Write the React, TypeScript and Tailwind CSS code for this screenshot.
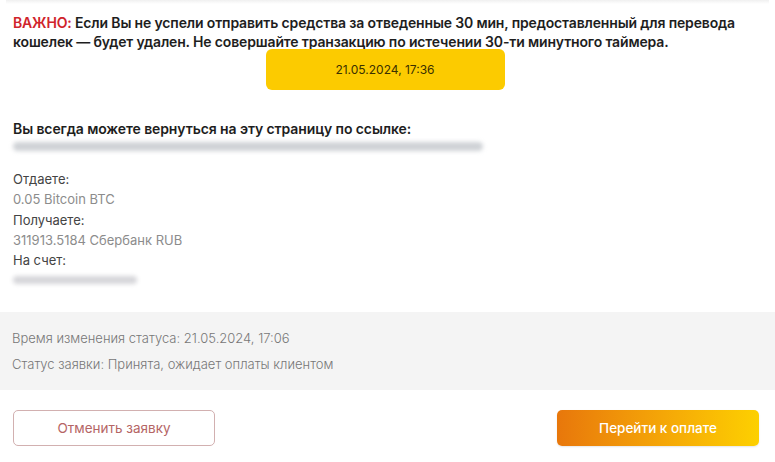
import React from "react";

export default function App() {
  return (
    <div className="w-[775px] h-[462px] bg-white overflow-hidden relative" style={{ fontFamily: "Inter, 'Noto Sans', sans-serif" }}>
      <div className="absolute left-[6px] right-[6px] top-0 h-[4px] bg-gradient-to-b from-[#f0f0f0] to-white" />
      <div className="px-[13px] pt-[13px]">
        <p className="text-[14px] leading-[19px] font-semibold text-[#1e1e1e] tracking-[-0.15px]">
          <span className="text-[#d0242b]">ВАЖНО:</span> Если Вы не успели отправить средства за отведенные 30 мин, предоставленный для перевода кошелек — будет удален. Не совершайте транзакцию по истечении 30-ти минутного таймера.
        </p>
        <div className="flex justify-center mt-[-2px] pr-[5px]">
          <div className="w-[239px] h-[41px] rounded-[6px] bg-[#fccb00] flex items-center justify-center text-[12px] text-[#3a3000]">
            21.05.2024, 17:36
          </div>
        </div>
        <p className="mt-[29px] text-[14px] leading-[19px] font-semibold text-[#1e1e1e] tracking-[-0.1px]">
          Вы всегда можете вернуться на эту страницу по ссылке:
        </p>
        <div className="h-[16px] flex items-center">
          <div className="w-[470px] h-[9px] rounded-full bg-[#cfd2d6] blur-[2px]" />
        </div>
        <div className="mt-[15px] flex flex-col text-[13px] leading-[20.3px]">
          <span className="text-[#444]">Отдаете:</span>
          <span className="text-[#8c8c8c]">0.05 Bitcoin BTC</span>
          <span className="text-[#444]">Получаете:</span>
          <span className="text-[#8c8c8c]">311913.5184 Сбербанк RUB</span>
          <span className="text-[#444]">На счет:</span>
          <div className="h-[20px] flex items-center">
            <div className="w-[124px] h-[8px] rounded-full bg-[#d6d6da] blur-[2px]" />
          </div>
        </div>
      </div>
      <div className="mt-[22px] h-[78px] bg-[#f4f4f4] px-[12px] pt-[17px] flex flex-col gap-[8px] text-[13px] leading-[18px] text-[#777] font-light">
        <span>Время изменения статуса: 21.05.2024, 17:06</span>
        <span>Статус заявки: Принята, ожидает оплаты клиентом</span>
      </div>
      <div className="flex justify-between px-[13px] pr-[16px] mt-[20px]">
        <button className="w-[202px] h-[36px] rounded-[5px] border border-[#d2b0b0] text-[13.5px] text-[#b56565] bg-white">
          Отменить заявку
        </button>
        <button className="w-[202px] h-[36px] rounded-[5px] bg-gradient-to-r from-[#e8770b] to-[#fdd000] text-[13.5px] text-white font-medium shadow-[0_1px_2px_rgba(0,0,0,0.1)]">
          Перейти к оплате
        </button>
      </div>
    </div>
  );
}
